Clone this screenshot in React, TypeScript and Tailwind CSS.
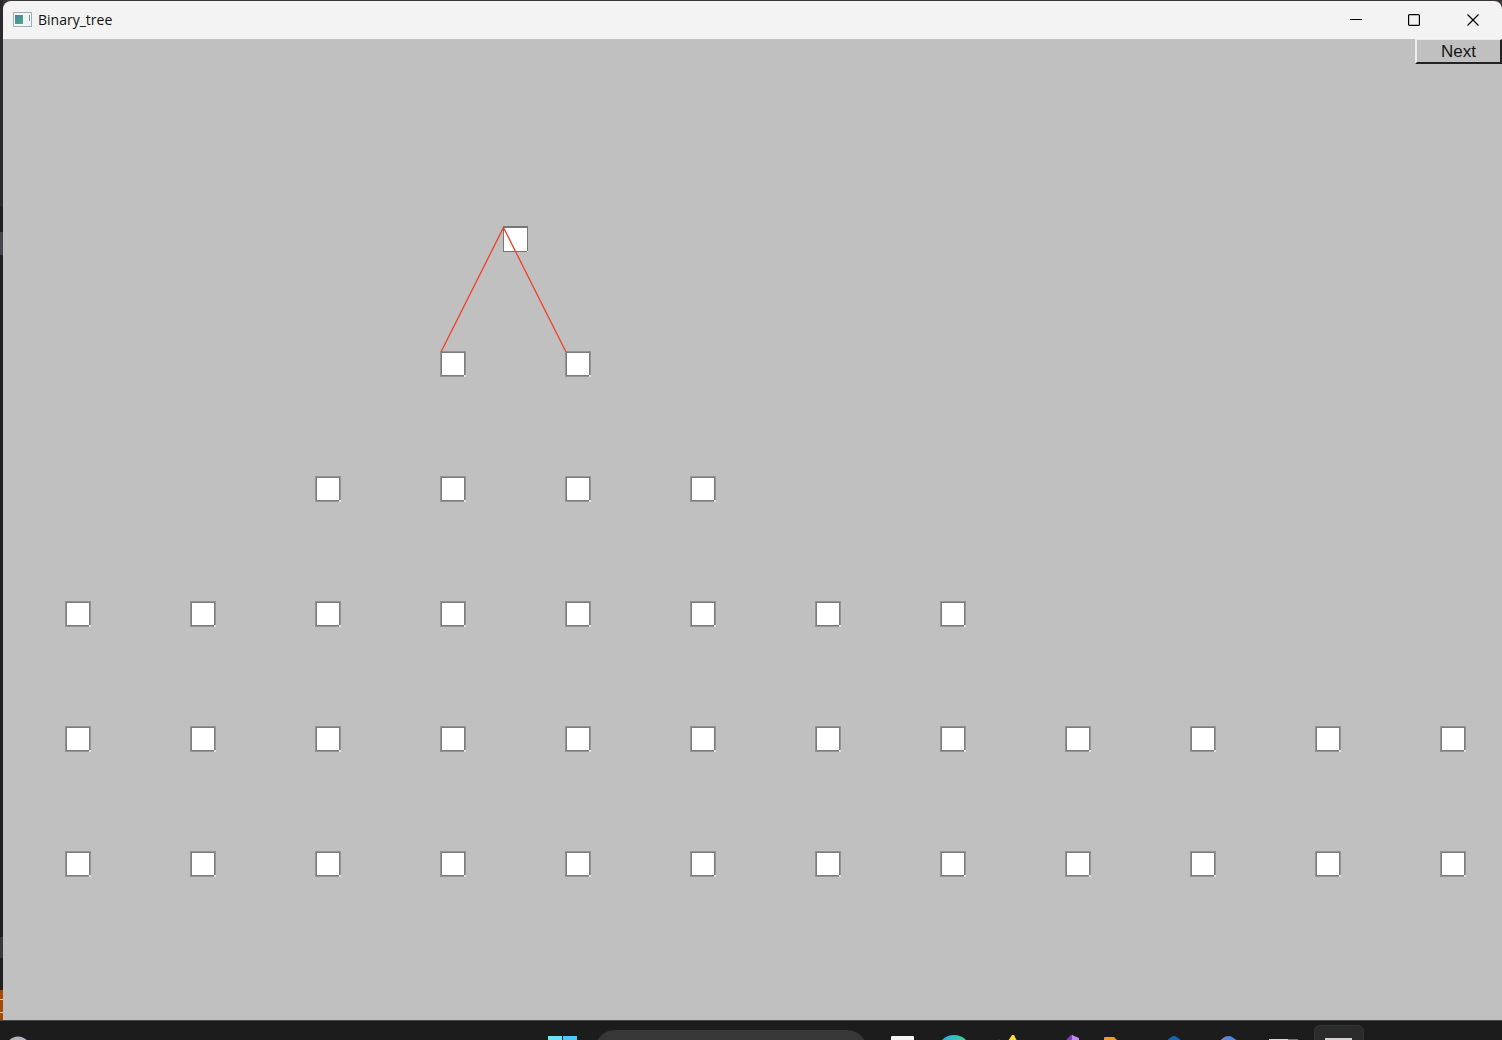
type Node = { x: number; y: number };

const STEP = 125;

const row = (startX: number, y: number, count: number): Node[] =>
  Array.from({ length: count }, (_, i) => ({ x: startX + i * STEP, y }));

const root: Node = { x: 500, y: 187 };

const nodes: Node[] = [
  ...row(437, 312, 2),
  ...row(312, 437, 4),
  ...row(62, 562, 8),
  ...row(62, 687, 12),
  ...row(62, 812, 12),
];

function WindowIcon() {
  return (
    <svg className="h-4 w-5 shrink-0" viewBox="0 0 20 16" aria-hidden="true">
      <defs>
        <linearGradient id="pane" x1="0" y1="0" x2="1" y2="1">
          <stop offset="0" stopColor="#4a7fa5" />
          <stop offset="1" stopColor="#4fae80" />
        </linearGradient>
      </defs>
      <rect x="0.5" y="0.5" width="18" height="14" fill="#f4f7f8" stroke="#a3adb8" />
      <rect x="2" y="3" width="8" height="9" fill="url(#pane)" />
      <rect x="11" y="3" width="4" height="9" fill="#eef2f2" />
      <rect x="16" y="3" width="1" height="6" fill="#5b9a8e" />
    </svg>
  );
}

function TitleBar() {
  return (
    <header className="flex h-[38px] shrink-0 items-center bg-[#f3f3f3] pl-[10px]">
      <WindowIcon />
      <h1 className="ml-[5px] flex-1 font-['Open_Sans','Noto_Sans',sans-serif] text-[14px] leading-5 text-[#111]">
        Binary_tree
      </h1>
      <button aria-label="Minimize" className="flex h-full w-[58px] items-center justify-center">
        <svg className="h-3 w-3" viewBox="0 0 12 12" aria-hidden="true">
          <path d="M0 5.5H12" stroke="#000" />
        </svg>
      </button>
      <button aria-label="Maximize" className="flex h-full w-[58px] items-center justify-center">
        <svg className="h-3 w-3" viewBox="0 0 12 12" aria-hidden="true">
          <rect x="0.6" y="0.6" width="10.8" height="10.8" rx="1" fill="none" stroke="#000" strokeWidth="1.2" />
        </svg>
      </button>
      <button aria-label="Close" className="flex h-full w-[59px] items-center justify-center">
        <svg className="h-3 w-3" viewBox="0 0 12 12" aria-hidden="true">
          <path d="M0.5 0.5L11.5 11.5M11.5 0.5L0.5 11.5" stroke="#000" strokeWidth="1.2" />
        </svg>
      </button>
    </header>
  );
}

function TreeCanvas() {
  return (
    <main className="relative flex-1 overflow-hidden bg-[#c0c0c0]">
      <div
        className="absolute h-[26px] w-[25px] border border-t-2 border-[#777] bg-white"
        style={{ left: root.x, top: root.y }}
      >
        <span className="absolute -right-px -bottom-px h-px w-px bg-white" />
      </div>
      {nodes.map((n) => (
        <div
          key={`${n.x}-${n.y}`}
          className="absolute h-[26px] w-[26px] border border-[#949494] bg-white"
          style={{ left: n.x, top: n.y }}
        >
          <div className="h-full border border-[#7c7c7c]" />
          <span className="absolute -right-px -bottom-px h-0.5 w-0.5 bg-[#e4e4e4]" />
        </div>
      ))}
      <svg className="absolute top-0 left-0 h-[400px] w-[700px]" viewBox="0 0 700 400" aria-hidden="true">
        <path d="M438 313L500.5 188.5L563 313" fill="none" stroke="#ee3f2a" strokeWidth="1.3" />
      </svg>
      <div className="flex justify-end">
        <button className="h-[25px] w-[87px] border-t border-r-2 border-b-2 border-l-2 border-t-[#ececec] border-r-[#222] border-b-[#222] border-l-[#ececec] bg-[#c0c0c0] pt-px font-['Liberation_Sans',sans-serif] text-[17px] leading-5 text-[#151515]">
          Next
        </button>
      </div>
    </main>
  );
}

const cell = "h-5 w-[54px] shrink-0";

function Taskbar() {
  return (
    <footer className="flex h-5 shrink-0 overflow-hidden border-t border-[#484a4a] bg-[#1c1c1c]">
      <button aria-label="Widgets" className="flex-[548] text-left">
        <svg className="h-5 w-10" viewBox="0 1 40 20" aria-hidden="true">
          <circle cx="18" cy="29" r="12.5" fill="#aeb4bd" />
        </svg>
      </button>
      <button aria-label="Start" className="w-[47px] shrink-0">
        <svg className="h-5 w-full" viewBox="0 1 47 20" aria-hidden="true">
          <rect y="16" width="14" height="8" fill="#6be3fb" />
          <rect x="15" y="16" width="14" height="8" fill="#4cc8f8" />
        </svg>
      </button>
      <button aria-label="Search" className="mt-[9px] h-10 w-[272px] shrink-0 rounded-full bg-[#373737]" />
      <div className="ml-[9px] flex flex-[626]">
        <button aria-label="Task view" className={cell}>
          <svg viewBox="0 1 54 20" aria-hidden="true">
            <rect x="15" y="16" width="23" height="8" rx="1" fill="#f4f4f4" />
          </svg>
        </button>
        <button aria-label="Browser" className={cell}>
          <svg viewBox="0 1 54 20" aria-hidden="true">
            <defs>
              <linearGradient id="wave">
                <stop offset="0.2" stopColor="#27b0dc" />
                <stop offset="0.8" stopColor="#43cc9c" />
              </linearGradient>
            </defs>
            <circle cx="24" cy="32" r="17" fill="url(#wave)" />
          </svg>
        </button>
        <button aria-label="Notes" className={cell}>
          <svg viewBox="0 1 54 20" aria-hidden="true">
            <path d="M13 21L15 19L16 21Z" fill="#555" />
            <path d="M24 21L28 15H30L33 21Z" fill="#f7dd3b" />
          </svg>
        </button>
        <button aria-label="Code editor" className={cell}>
          <svg viewBox="0 1 54 20" aria-hidden="true">
            <path d="M27 21L33 15L35 15V21Z" fill="#7a42b8" />
            <path d="M34 15L41 18V21H34Z" fill="#c08cf3" />
          </svg>
        </button>
        <button aria-label="Files" className={cell}>
          <svg viewBox="0 1 54 20" aria-hidden="true">
            <path d="M12 21V18Q12 17 13 17H22L25 20V21Z" fill="#e3a21a" />
          </svg>
        </button>
        <button aria-label="Mail" className={cell}>
          <svg viewBox="0 1 54 20" aria-hidden="true">
            <path d="M20 21Q24 18 26 16.5Q28 15.5 30 16.5Q32 18 36 21Z" fill="#1268b8" />
          </svg>
        </button>
        <button aria-label="Office" className={cell}>
          <svg viewBox="0 1 54 20" aria-hidden="true">
            <path d="M20 21Q23 17 27 16V21Z" fill="#9a76c2" />
            <path d="M24 21L26 17Q29 15 32 17L38 21Z" fill="#4b8ae0" />
          </svg>
        </button>
        <button aria-label="Console" className={cell}>
          <svg viewBox="0 1 54 20" aria-hidden="true">
            <rect x="15" y="19" width="19" height="3" fill="#d8d4d8" />
            <rect x="34" y="19" width="10" height="3" fill="#777" />
          </svg>
        </button>
        <button
          aria-label="Binary_tree"
          className="mt-1 ml-[6px] h-12 w-[50px] shrink-0 rounded-md border border-[#353535] bg-[#2b2b2b]"
        >
          <svg className="h-full w-full" viewBox="0 0 48 46" aria-hidden="true">
            <rect x="10" y="12" width="27" height="8" fill="#d4d0d4" />
          </svg>
        </button>
      </div>
    </footer>
  );
}

export default function App() {
  return (
    <div className="flex h-screen min-h-[900px] flex-col overflow-hidden bg-[#3a3638]">
      <div className="flex min-h-0 flex-1">
        <div className="flex w-[3px] shrink-0 flex-col bg-[#1f1e22]" aria-hidden="true">
          <div className="h-[206px] bg-[#2b292e]" />
          <div className="mt-[26px] h-[23px] bg-[#45444a]" />
          <div className="flex-1" />
          <div className="mb-[32px] h-[21px] bg-[#38373b]" />
          <div className="flex h-[30px] flex-col bg-[#a34a05]">
            <div className="mt-[9px] h-px bg-[#f0d0b0]" />
            <div className="mt-3 h-px bg-[#f0d0b0]" />
          </div>
        </div>
        <div className="mt-px flex flex-1 flex-col overflow-hidden rounded-t-lg">
          <TitleBar />
          <TreeCanvas />
        </div>
      </div>
      <Taskbar />
    </div>
  );
}
